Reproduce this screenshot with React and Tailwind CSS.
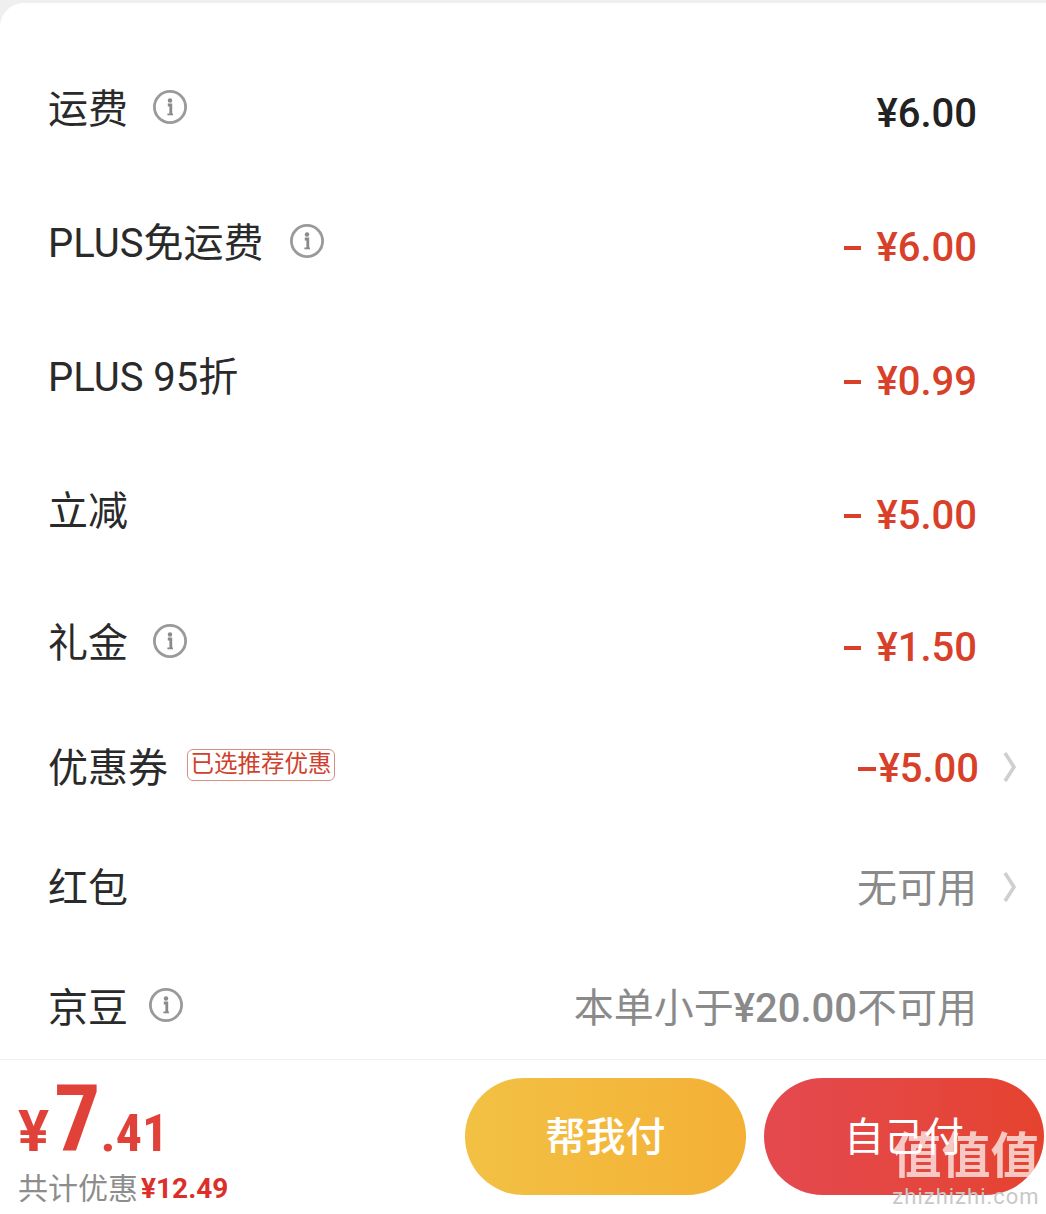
import React from 'react';

const InfoIcon = () => (
  <svg width="36" height="36" viewBox="0 0 36 36" fill="none" className="shrink-0">
    <circle cx="18" cy="18" r="15.6" stroke="#9a9a9a" strokeWidth="2.8" />
    <circle cx="18" cy="11.5" r="2.2" fill="#8a8a8a" />
    <path d="M15.8 16h3v9" stroke="#8a8a8a" strokeWidth="2.8" />
    <path d="M15.4 25.4h5.6" stroke="#8a8a8a" strokeWidth="1.8" />
  </svg>
);

const Chevron = () => (
  <svg width="14" height="32" viewBox="0 0 14 32" fill="none" className="shrink-0">
    <path d="M2 2l9 14-9 14" stroke="#cfcfcf" strokeWidth="3.6" />
  </svg>
);

const Minus = ({ className }) => <span className={`block h-[4px] bg-[#d9402a] ${className}`} />;

const rowFont = { fontFamily: 'Roboto, "Noto Sans CJK SC", sans-serif' };

const priceRows = [
  { label: '运费', info: true, gap: 'ml-[24px]', amount: '¥6.00', color: 'text-[#222222]', height: 'h-[134px]' },
  { label: 'PLUS免运费', info: true, gap: 'ml-[26px]', amount: '¥6.00', minus: true, height: 'h-[134px]' },
  { label: 'PLUS 95折', amount: '¥0.99', minus: true, height: 'h-[134px]' },
  { label: '立减', amount: '¥5.00', minus: true, height: 'h-[134px]' },
  { label: '礼金', info: true, gap: 'ml-[24px]', amount: '¥1.50', minus: true, height: 'h-[130px]' },
];

const PriceRow = ({ label, info, gap, amount, minus, height, color = 'text-[#d9402a]' }) => (
  <div className={`${height} flex items-center justify-between pl-[48px] pr-[69px]`}>
    <div className="flex items-center text-[40px] text-[#2a2a2a] -mt-[2px]">
      <span>{label}</span>
      {info && <span className={`${gap} -mt-[6px]`}><InfoIcon /></span>}
    </div>
    <div className={`flex items-center text-[40px] font-medium mt-[6px] ${color}`}>
      {minus && <Minus className="w-[17px] mr-[15px]" />}
      <span>{amount}</span>
    </div>
  </div>
);

export default function App() {
  return (
    <div className="relative w-[1046px] h-[1214px] overflow-hidden bg-[#efefef] pt-[3px]" style={rowFont}>
      <div className="h-[1211px] bg-white rounded-tl-[24px] flex flex-col">
        <div className="pt-[41px] flex-1">
          {priceRows.map((row) => (
            <PriceRow key={row.label + row.amount} {...row} />
          ))}

          <div className="h-[114px] pt-[4px] flex items-center justify-between pl-[48px] pr-[29px]">
            <div className="flex items-center">
              <span className="text-[40px] text-[#2a2a2a]">优惠券</span>
              <span className="ml-[19px] -mt-[8px] h-[32px] w-[148px] flex items-center justify-center border border-[#d9907f] rounded-[6px] text-[#d0402c] text-[23.5px] leading-none whitespace-nowrap">
                已选推荐优惠
              </span>
            </div>
            <div className="flex items-center">
              <Minus className="w-[18px] mr-[2px]" />
              <span className="text-[40px] font-medium text-[#d9402a]">¥5.00</span>
              <span className="ml-[24px] -mt-[4px]"><Chevron /></span>
            </div>
          </div>

          <div className="h-[126px] pt-[4px] flex items-center justify-between pl-[48px] pr-[29px]">
            <span className="text-[40px] text-[#2a2a2a]">红包</span>
            <div className="flex items-center">
              <span className="text-[40px] text-[#8a8a8a]">无可用</span>
              <span className="ml-[26px] -mt-[4px]"><Chevron /></span>
            </div>
          </div>

          <div className="h-[109px] pt-[9px] flex items-center justify-between pl-[48px] pr-[69px]">
            <div className="flex items-center">
              <span className="text-[40px] text-[#2a2a2a]">京豆</span>
              <span className="ml-[20px] -mt-[8px]"><InfoIcon /></span>
            </div>
            <span className="text-[40px] text-[#8a8a8a] whitespace-nowrap">
              本单小于<span className="font-medium">¥20.00</span>不可用
            </span>
          </div>
        </div>

        <div className="h-[155px] shrink-0 border-t border-[#f0f0f0] flex items-center justify-between pl-[18px] pr-[2px]">
          <div className="flex flex-col mt-[3px]">
            <div className="flex items-baseline h-[96px] text-[#e0423a] font-bold leading-none">
              <span className="text-[58px]">¥</span>
              <span className="text-[92px] ml-[5px]" style={{ fontFamily: '"Roboto Condensed", Roboto, sans-serif' }}>7</span>
              <span className="text-[52px]" style={{ fontFamily: '"Roboto Condensed", Roboto, sans-serif' }}>.41</span>
            </div>
            <div className="flex items-center mt-[4px] leading-none">
              <span className="text-[30px] text-[#8d8d8d]">共计优惠</span>
              <span className="text-[28px] font-bold text-[#dc2f2a] ml-[3px]">¥12.49</span>
            </div>
          </div>
          <div className="flex items-center gap-[18px] -mt-[1px]">
            <div className="w-[281px] h-[117px] pt-[3px] rounded-full bg-gradient-to-r from-[#f2c144] to-[#f3b035] flex items-center justify-center text-white text-[40px] font-medium">
              帮我付
            </div>
            <div className="w-[280px] h-[117px] pt-[3px] rounded-full bg-gradient-to-r from-[#e4494f] to-[#e5432e] flex items-center justify-center text-white text-[40px]">
              自己付
            </div>
          </div>
        </div>
      </div>

      {/* watermark */}
      <div className="absolute left-[891px] top-[1132px] w-[150px] flex flex-col items-center text-white/70 leading-none">
        <span className="text-[49px] font-bold whitespace-nowrap">值值值</span>
        <span className="text-[22px] text-[#c8c8c8] mt-[5px] tracking-[1px]">zhizhizhi.com</span>
      </div>
    </div>
  );
}
